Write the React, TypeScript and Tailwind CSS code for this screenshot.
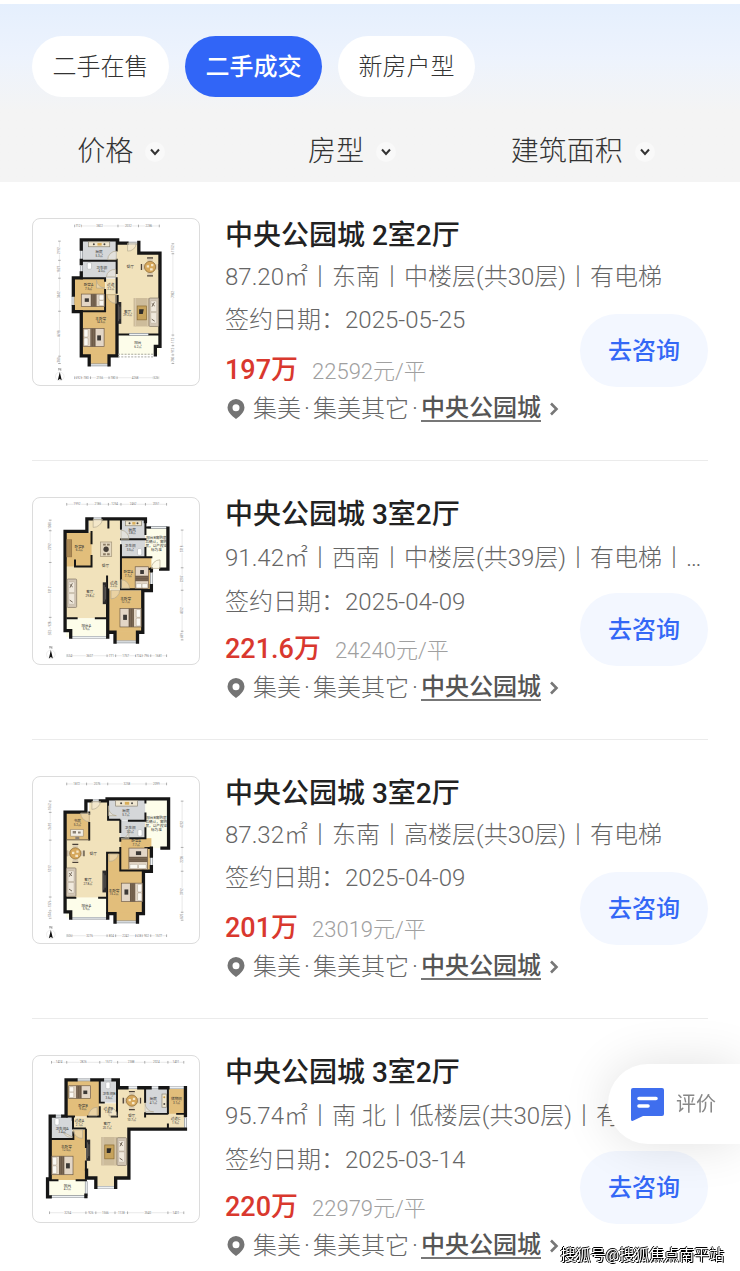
import { ReactNode } from "react";

type Listing = {
  id: number;
  title: string;
  detail: string;
  long?: boolean;
  date: string;
  price: string;
  unitPrice: string;
  plan: ReactNode;
};

const WALL = "#161616";
const FLOOR = "#f1e2bb";
const WOOD = "#e2be7b";
const TILE = "#d5d7d9";
const BALCONY = "#fdfdea";

type RoomProps = { x: number; y: number; w: number; h: number; fill: string };

function Room({ x, y, w, h, fill }: RoomProps) {
  return <rect x={x} y={y} width={w} height={h} fill={fill} />;
}

function Label({ x, y, name, area }: { x: number; y: number; name: string; area?: string }) {
  return (
    <text x={x} y={y} textAnchor="middle" fontSize="11" fill="#333">
      {name}
      {area && (
        <tspan x={x} dy="11" fontSize="9">
          {area}
        </tspan>
      )}
    </text>
  );
}

function Walls({ d }: { d: string }) {
  return <path d={d} fill="none" stroke={WALL} strokeWidth="10" strokeLinecap="square" />;
}

function InnerWalls({ d }: { d: string }) {
  return <path d={d} fill="none" stroke={WALL} strokeWidth="6" strokeLinecap="square" />;
}

function Windows({ d }: { d: string }) {
  return (
    <>
      <path d={d} fill="none" stroke="#8b9096" strokeWidth="8" />
      <path d={d} fill="none" stroke="#eef1f3" strokeWidth="4" />
    </>
  );
}

function Doors({ d }: { d: string }) {
  return <path d={d} fill="#f7f1e0" fillOpacity="0.4" stroke="#b3a88f" strokeWidth="2" />;
}

// pillows are on the left unless rotated
function Bed({ x, y, w = 62, h = 54, rotate = 0 }: { x: number; y: number; w?: number; h?: number; rotate?: number }) {
  return (
    <g transform={`translate(${x} ${y}) rotate(${rotate} ${w / 2} ${h / 2})`}>
      <rect width={w} height={h} fill="#e3d6c6" stroke="#6b5844" strokeWidth="2" />
      <rect x="2" y="3" width={w * 0.2} height={h * 0.42} rx="3" fill="#fbf8f2" stroke="#8b7a66" />
      <rect x="2" y={h * 0.52} width={w * 0.2} height={h * 0.42} rx="3" fill="#fbf8f2" stroke="#8b7a66" />
      <rect x={w * 0.34} width={w * 0.25} height={h} fill="#6c5a48" />
      <path d={`M${w * 0.4} 0V${h}M${w * 0.5} 0V${h}`} stroke="#85725d" strokeWidth="2" />
      <rect x={w * 0.67} y={h * 0.38} width={w * 0.18} height={h * 0.28} fill="#3c3936" />
    </g>
  );
}

function Sofa({ x, y, h }: { x: number; y: number; h: number }) {
  return (
    <g transform={`translate(${x} ${y})`}>
      <rect width="29" height={h} rx="3" fill="#d2c6b5" stroke="#7e7263" strokeWidth="2" />
      <rect x="5" y="9" width="18" height={h / 2 - 11} rx="2" fill="#f0e9dd" stroke="#a09482" />
      <rect x="5" y={h / 2 + 1} width="18" height={h / 2 - 11} rx="2" fill="#f0e9dd" stroke="#a09482" />
      <path d={`M8 16l9 8M16 13l-7 13M8 ${h - 22}l9 6`} stroke="#6f6456" strokeWidth="3" />
    </g>
  );
}

function Rug({ x, y }: { x: number; y: number }) {
  return (
    <g transform={`translate(${x} ${y})`}>
      <rect width="48" height="86" fill="#cdbc9b" />
      <path d="M6 0v86M42 0v86" stroke="#d9c9ac" strokeWidth="3" />
      <rect x="11" y="24" width="28" height="42" fill="#c6a35c" stroke="#8a6a33" strokeWidth="2" />
      <path d="M17 34h14l-3 14H17z" fill="#2d2b29" />
    </g>
  );
}

function Dining({ x, y }: { x: number; y: number }) {
  return (
    <g transform={`translate(${x} ${y})`}>
      <path d="M-9-27H9M-9 27H9M-26-9V9M26-9V9" stroke="#4a4038" strokeWidth="4" />
      <path d="M-8-21H8M-8 21H8M-20-8V8M20-8V8" stroke="#d9cbb2" strokeWidth="7" />
      <circle r="17" fill="#d6a85c" stroke="#82602d" strokeWidth="2" />
      <path d="M-10-5h7v7h-7zM3-9h7v7H3zM0 4h8v7H0z" fill="#f6e7c8" />
    </g>
  );
}

function Cabinet({ x, y, h }: { x: number; y: number; h: number }) {
  return (
    <g transform={`translate(${x} ${y})`}>
      <rect width="12" height={h} fill="#2c2a2a" />
      <path d={`M4 8V${h - 8}M8 14V${h - 14}`} stroke="#77716b" strokeWidth="2" />
    </g>
  );
}

function Stove({ x, y, w = 62, h = 15 }: { x: number; y: number; w?: number; h?: number }) {
  return (
    <g transform={`translate(${x} ${y})`}>
      <rect width={w} height={h} fill="#efe6d0" stroke="#87806f" strokeWidth="2" />
      <circle cx={w * 0.25} cy={h * 0.5} r="3" fill="#4b4843" />
      <circle cx={w * 0.75} cy={h * 0.5} r="3" fill="#4b4843" />
      <rect x={w * 0.42} y={h * 0.25} width={w * 0.2} height={h * 0.5} fill="#d8ad58" />
    </g>
  );
}

function Toilet({ x, y }: { x: number; y: number }) {
  return <rect x={x} y={y} width="13" height="20" rx="4" fill="#fff" stroke="#b4b8bb" strokeWidth="2" />;
}

type RulerProps = {
  horizontal: { y: number; ticks: number[]; values: string[] }[];
  vertical: { x: number; ticks: number[]; values: string[] }[];
};

function Rulers({ horizontal, vertical }: RulerProps) {
  return (
    <g fontSize="9" fill="#777" textAnchor="middle">
      {horizontal.map(({ y, ticks, values }) => (
        <g key={y}>
          <path d={`M${ticks[0]} ${y}H${ticks[ticks.length - 1]}`} stroke="#bbb" strokeWidth="1" />
          {ticks.map((t) => (
            <path key={t} d={`M${t} ${y - 4}v8`} stroke="#888" strokeWidth="2" />
          ))}
          {values.map((v, i) => (
            <text key={i} x={(ticks[i] + ticks[i + 1]) / 2} y={y + 3} stroke="#fff" strokeWidth="4" paintOrder="stroke">
              {v}
            </text>
          ))}
        </g>
      ))}
      {vertical.map(({ x, ticks, values }) => (
        <g key={x}>
          <path d={`M${x} ${ticks[0]}V${ticks[ticks.length - 1]}`} stroke="#bbb" strokeWidth="1" />
          {ticks.map((t) => (
            <path key={t} d={`M${x - 4} ${t}h8`} stroke="#888" strokeWidth="2" />
          ))}
          {values.map((v, i) => {
            const cy = (ticks[i] + ticks[i + 1]) / 2;
            return (
              <text
                key={i}
                x={x}
                y={cy + 3}
                transform={`rotate(-90 ${x} ${cy})`}
                stroke="#fff"
                strokeWidth="4"
                paintOrder="stroke"
              >
                {v}
              </text>
            );
          })}
        </g>
      ))}
    </g>
  );
}

function Compass({ x, y }: { x: number; y: number }) {
  return (
    <g transform={`translate(${x} ${y})`}>
      <circle r="13" fill="none" stroke="#ccc" strokeWidth="1" />
      <path d="M0-13L6 12 0 8-6 12z" fill="#111" />
      <path d="M-3-18v-7l6 7v-7" fill="none" stroke="#777" strokeWidth="2" />
    </g>
  );
}

function PlanA() {
  return (
    <>
      <Room x={280} y={98} w={66} h={276} fill={FLOOR} />
      <Room x={340} y={130} w={70} h={244} fill={FLOOR} />
      <Room x={245} y={205} w={40} h={50} fill={FLOOR} />
      <Room x={173} y={88} w={106} h={63} fill={TILE} />
      <Room x={173} y={151} w={106} h={53} fill={TILE} />
      <Room x={147} y={203} w={97} h={102} fill={WOOD} />
      <Room x={173} y={303} w={106} h={135} fill={WOOD} />
      <Room x={244} y={252} w={35} h={60} fill={WOOD} />
      <Room x={199} y={436} w={58} h={28} fill={WOOD} />
      <Room x={282} y={374} w={126} h={62} fill={BALCONY} />
      <Windows d="M172 120v26M172 166v20M147 258v30M200 466h56M312 98h28M316 374h60" />
      <Walls d="M172 116V88h110v10h28M172 150v10M172 188v15h-24v52M148 290v15h24v134h24v27M256 466v-27h24V260M346 96v32h64v282h-14v26" />
      <InnerWalls d="M279 92v28M279 148v40M175 151h104M172 204h72v8M244 240v64h-70M279 204v44M280 374h34M378 374h32" />
      <path d="M283 434h110M283 442h110" stroke="#a8a8a0" strokeWidth="3" strokeDasharray="6 4" fill="none" />
      <Doors d="M312 98v24a24 24 0 0 0 26-24zM278 122a26 26 0 0 0-26 26h26zM276 178a24 24 0 0 0-28 22h28zM218 210v24h26a26 26 0 0 1-26-24zM250 254a26 26 0 0 0 28 26v-26z" />
      <Stove x={194} y={94} w={64} />
      <Toilet x={190} y={157} />
      <Bed x={172} y={252} w={70} h={38} rotate={180} />
      <Bed x={178} y={356} w={63} h={55} />
      <Cabinet x={281} y={276} h={66} />
      <Rug x={330} y={264} />
      <Sofa x={377} y={264} h={86} />
      <Dining x={380} y={170} />
      <Label x={226} y={128} name="厨房" area="5.3㎡" />
      <Label x={234} y={175} name="卫生间" area="4.0㎡" />
      <Label x={194} y={228} name="卧室A" area="7.5㎡" />
      <Label x={261} y={228} name="过道" area="2.2㎡" />
      <Label x={320} y={174} name="餐厅" />
      <Label x={312} y={308} name="客厅" area="29.2㎡" />
      <Label x={231} y={329} name="主卧室" area="14.5㎡" />
      <Label x={343} y={404} name="阳台" area="6.2㎡" />
      <Rulers
        horizontal={[
          { y: 46, ticks: [152, 172, 283, 345, 408], values: ["712", "3822", "2032", "2286"] },
          { y: 505, ticks: [152, 173, 200, 256, 280, 390, 406], values: ["692", "780", "2156", "780", "4268", "526"] },
        ]}
        vertical={[
          { x: 106, ticks: [92, 150, 204, 304, 440, 462], values: ["2192", "1827", "3442", "4698", "780"] },
          { x: 449, ticks: [100, 130, 376, 408, 436, 462], values: ["1152", "7982", "112", "912", "780"] },
        ]}
      />
      <Compass x={107} y={501} />
    </>
  );
}

function PlanB() {
  return (
    <>
      <Room x={195} y={90} w={95} h={200} fill={FLOOR} />
      <Room x={124} y={215} w={126} h={174} fill={FLOOR} />
      <Room x={240} y={260} w={52} h={42} fill={FLOOR} />
      <Room x={124} y={130} w={79} h={102} fill={WOOD} />
      <Room x={292} y={90} w={74} h={60} fill={TILE} />
      <Room x={292} y={151} w={74} h={52} fill={TILE} />
      <Room x={366} y={116} w={68} h={124} fill={BALCONY} />
      <Room x={292} y={205} w={92} h={98} fill={WOOD} />
      <Room x={251} y={304} w={106} h={126} fill={WOOD} />
      <Room x={274} y={428} w={70} h={28} fill={WOOD} />
      <Room x={126} y={389} w={122} h={56} fill={BALCONY} />
      <Windows d="M142 446h108M274 460h66M372 114h60M384 250v36M206 88h30M124 152v60" />
      <Walls d="M204 88h-15v38h-66v300h17v20M238 88h128v8M434 116v124h-22M384 240v5M384 290v15h-26v126h-16v30M274 461v-30h-22V304M252 384v62" />
      <InnerWalls d="M203 128v34M203 200v32h-50v-18M254 92v22M292 92v26M292 150h74M366 96v38M366 176v26M292 168v36h92M292 205v96h64M250 262v122M130 389h28M216 389h34M366 114h14M366 240h20" />
      <Doors d="M208 90v24a28 28 0 0 0 28-24zM292 122a26 26 0 0 1 24 28h-24zM384 238a26 26 0 0 1 26-26v26zM262 304v26a26 26 0 0 0 26-26zM292 272a26 26 0 0 1 26 26h-26z" />
      <Stove x={306} y={94} w={48} />
      <Toilet x={342} y={178} />
      <rect x="127" y="150" width="17" height="54" fill="#9b7a4c" />
      <path d="M132 152v50M138 152v50" stroke="#c9a569" strokeWidth="2" />
      <rect x="230" y="158" width="34" height="44" fill="#e4d8c0" stroke="#a09276" strokeWidth="2" />
      <circle cx="247" cy="180" r="8" fill="#453e37" />
      <path d="M238 163h8v6h-8zM250 163h8v6h-8zM238 192h8v6h-8zM250 192h8v6h-8z" fill="#8a7b64" />
      <Sofa x={129} y={270} h={86} />
      <Cabinet x={237} y={280} h={66} />
      <Bed x={322} y={246} w={66} h={40} rotate={-90} />
      <Bed x={289} y={359} w={64} h={56} rotate={180} />
      <Label x={166} y={175} name="卧室B" area="6.2㎡" />
      <Label x={326} y={124} name="厨房" area="3.8㎡" />
      <Label x={320} y={174} name="卫生间" area="3.5㎡" />
      <Label x={245} y={234} name="餐厅" />
      <Label x={314} y={253} name="卧室A" area="7.7㎡" />
      <Label x={270} y={284} name="过道" area="2.2㎡" />
      <Label x={198} y={312} name="客厅" area="29.8㎡" />
      <Label x={306} y={332} name="主卧室" area="12.7㎡" />
      <Label x={187} y={414} name="阳台A" area="5.9㎡" />
      <Label x={399} y={150} name="阳台B需购房" />
      <Label x={399} y={162} name="后确认，需购" />
      <Label x={399} y={174} name="房，以产权证" />
      <Label x={399} y={186} name="标为准" />
      <Rulers
        horizontal={[
          { y: 44, ticks: [128, 190, 254, 292, 366, 430], values: ["1992", "2186", "1254", "2462", "2051"] },
          { y: 502, ticks: [128, 144, 250, 276, 336, 356, 382, 430], values: ["534", "3607", "771", "1757", "734", "796", "1681"] },
        ]}
        vertical={[
          { x: 78, ticks: [92, 124, 220, 386, 426, 438], values: ["1080", "2792", "5312", "928", "553"] },
          { x: 477, ticks: [122, 236, 304, 428, 454], values: ["3718", "2207", "4052", "689"] },
        ]}
      />
      <Compass x={80} y={498} />
    </>
  );
}

function PlanC() {
  return (
    <>
      <Room x={196} y={98} w={56} h={60} fill={FLOOR} />
      <Room x={196} y={152} w={94} h={102} fill={FLOOR} />
      <Room x={124} y={216} w={126} h={174} fill={FLOOR} />
      <Room x={124} y={132} w={74} h={84} fill={WOOD} />
      <Room x={254} y={92} w={112} h={64} fill={TILE} />
      <Room x={290} y={157} w={76} h={52} fill={TILE} />
      <Room x={366} y={92} w={68} h={148} fill={BALCONY} />
      <Room x={290} y={210} w={94} h={98} fill={WOOD} />
      <Room x={250} y={254} w={40} h={60} fill={WOOD} />
      <Room x={250} y={308} w={110} h={130} fill={WOOD} />
      <Room x={274} y={434} w={68} h={28} fill={WOOD} />
      <Room x={126} y={390} w={122} h={60} fill={BALCONY} />
      <Windows d="M142 452h108M274 463h66M206 97h20M384 266v34" />
      <Walls d="M202 97h-16v34h-63v302h17v19M230 97h20V91h186v149h-20M384 240v24M384 296v14h-24v128h-18v26M274 464v-26h-22M252 438v14" />
      <InnerWalls d="M253 96v58h34M196 132v4M196 164v50M316 157h50v-22M290 157v34M366 180v30h-76v8M366 94v8M290 240v68h70M250 254h38M250 256v180M128 390h26M226 390h24M366 240h18" />
      <path d="M128 215h68" stroke="#6f6350" strokeWidth="3" />
      <Doors d="M204 99v24a26 26 0 0 0 26-24zM170 134a26 26 0 0 0 26 26v-26zM254 112a26 26 0 0 0 24 30h-24zM292 212a26 26 0 0 0 24-30v30zM256 258v22a26 26 0 0 0 28-22z" />
      <Stove x={276} y={96} w={66} h={17} />
      <Toilet x={343} y={184} />
      <rect x="140" y="184" width="38" height="20" fill="#f2eee5" stroke="#9f8e73" strokeWidth="2" />
      <path d="M146 188h10v8h-10zM162 190h8v6h-8zM154 206h12v8h-12z" fill="#8b8174" />
      <Dining x={154} y={256} />
      <Sofa x={127} y={300} h={86} />
      <Cabinet x={236} y={308} h={66} />
      <Bed x={312} y={244} w={64} h={56} rotate={-90} />
      <Bed x={293} y={346} w={64} h={56} rotate={180} />
      <Label x={160} y={162} name="书房" area="5.2㎡" />
      <Label x={307} y={132} name="厨房" area="5.7㎡" />
      <Label x={320} y={183} name="卫生间" area="3.2㎡" />
      <Label x={338} y={223} name="卧室A" area="7.7㎡" />
      <Label x={208} y={262} name="餐厅" />
      <Label x={192} y={340} name="客厅" area="27.8㎡" />
      <Label x={271} y={372} name="主卧室" area="15.2㎡" />
      <Label x={187} y={417} name="阳台A" area="5.9㎡" />
      <Label x={399} y={152} name="阳台B需购房" />
      <Label x={399} y={164} name="后确认，需购" />
      <Label x={399} y={176} name="房，以产权证" />
      <Label x={399} y={188} name="标为准" />
      <Rulers
        horizontal={[
          { y: 46, ticks: [128, 188, 252, 368, 430], values: ["1872", "2076", "3258", "2099"] },
          { y: 505, ticks: [128, 144, 250, 276, 336, 356, 382, 430], values: ["506", "3276", "804", "2242", "638", "902", "1577"] },
        ]}
        vertical={[
          { x: 78, ticks: [98, 132, 216, 388, 430, 452], values: ["1062", "2692", "5312", "1376", "574"] },
          { x: 477, ticks: [98, 238, 310, 434, 458], values: ["4252", "2208", "3792", "875"] },
        ]}
      />
      <Compass x={80} y={501} />
    </>
  );
}

function PlanD() {
  return (
    <>
      <Room x={188} y={168} w={96} h={84} fill={FLOOR} />
      <Room x={148} y={210} w={60} h={36} fill={FLOOR} />
      <Room x={282} y={122} w={82} h={126} fill={FLOOR} />
      <Room x={360} y={200} w={126} h={48} fill={FLOOR} />
      <Room x={188} y={240} w={126} h={154} fill={FLOOR} />
      <Room x={216} y={392} w={60} h={30} fill={FLOOR} />
      <Room x={128} y={98} w={98} h={110} fill={WOOD} />
      <Room x={230} y={98} w={52} h={68} fill={TILE} />
      <Room x={366} y={122} w={68} h={76} fill={TILE} />
      <Room x={436} y={122} w={50} h={78} fill={WOOD} />
      <Room x={80} y={208} w={66} h={68} fill={TILE} />
      <Room x={80} y={278} w={106} h={122} fill={WOOD} />
      <Room x={146} y={248} w={40} h={34} fill={WOOD} />
      <Room x={76} y={400} w={112} h={48} fill={BALCONY} />
      <Windows d="M156 97h46M238 97h28M312 121h32M380 121h28M438 121h46M90 207h24M80 450h106M216 422h58M187 404v44M487 212v30" />
      <Walls d="M156 97h-30v110M204 97h32M268 97h16v24h26M346 121h34M410 121h24M487 121v84M487 246H316v148h-40v28M216 422v-28h-28v-24M124 207h-8M90 207H78v190h-8v54h8M186 450v-4" />
      <InnerWalls d="M228 98v68M228 166h12M280 100v108h-16M228 180v28h-36M130 208h20M365 124v40M365 198v10M365 200h66M434 124v74M462 200h24M434 232v14M147 210v34h36M80 276h68v-20M186 248v52M186 344v26M78 401h22M158 401h28M146 208v10" />
      <Doors d="M194 206a26 26 0 0 1 26-26v26zM148 248a26 26 0 0 0 28 26v-26zM146 270a26 26 0 0 1-28-14zM256 180a24 24 0 0 1 24 26h-24zM365 166a26 26 0 0 0 26 28h-26z" />
      <Bed x={134} y={115} w={66} h={38} />
      <Bed x={83} y={328} w={64} h={56} />
      <Toilet x={246} y={104} />
      <Toilet x={92} y={214} />
      <rect x="416" y="140" width="14" height="40" fill="#efe6d0" stroke="#87806f" strokeWidth="2" />
      <circle cx="423" cy="150" r="3" fill="#c99b42" />
      <circle cx="423" cy="170" r="3" fill="#4b4843" />
      <Dining x={325} y={160} />
      <Cabinet x={187} y={278} h={64} />
      <Rug x={232} y={270} />
      <Sofa x={280} y={272} h={84} />
      <Label x={177} y={178} name="卧室B" area="9.0㎡" />
      <Label x={256} y={144} name="卫生间B" area="3.6㎡" />
      <Label x={254} y={187} name="过道B" area="1.8㎡" />
      <Label x={324} y={210} name="餐厅" area="10.7㎡" />
      <Label x={390} y={158} name="厨房" area="4.1㎡" />
      <Label x={460} y={158} name="储物间" area="3.1㎡" />
      <Label x={457} y={219} name="过道C" area="1.9㎡" />
      <Label x={250} y={234} name="客厅" area="20.7㎡" />
      <Label x={166} y={226} name="过道A" area="2.1㎡" />
      <Label x={114} y={248} name="卫生间A" area="3.4㎡" />
      <Label x={127} y={302} name="主卧室" area="12.0㎡" />
      <Label x={130} y={420} name="阳台" area="4.2㎡" />
      <Rulers
        horizontal={[
          { y: 44, ticks: [82, 128, 228, 282, 364, 434, 482], values: ["1424", "2826", "1572", "2388", "2024", "1401"] },
          { y: 499, ticks: [76, 186, 216, 274, 312, 434, 482], values: ["3254", "926", "1566", "1138", "3540", "1401"] },
        ]}
        vertical={[]}
      />
    </>
  );
}

const listings: Listing[] = [
  {
    id: 1,
    title: "中央公园城 2室2厅",
    detail: "87.20㎡丨东南丨中楼层(共30层)丨有电梯",
    date: "2025-05-25",
    price: "197万",
    unitPrice: "22592元/平",
    plan: <PlanA />,
  },
  {
    id: 2,
    title: "中央公园城 3室2厅",
    detail: "91.42㎡丨西南丨中楼层(共39层)丨有电梯丨…",
    long: true,
    date: "2025-04-09",
    price: "221.6万",
    unitPrice: "24240元/平",
    plan: <PlanB />,
  },
  {
    id: 3,
    title: "中央公园城 3室2厅",
    detail: "87.32㎡丨东南丨高楼层(共30层)丨有电梯",
    date: "2025-04-09",
    price: "201万",
    unitPrice: "23019元/平",
    plan: <PlanC />,
  },
  {
    id: 4,
    title: "中央公园城 3室2厅",
    detail: "95.74㎡丨南 北丨低楼层(共30层)丨有电梯",
    long: true,
    date: "2025-03-14",
    price: "220万",
    unitPrice: "22979元/平",
    plan: <PlanD />,
  },
];

const tabs = ["二手在售", "二手成交", "新房户型"];
const filters = ["价格", "房型", "建筑面积"];

function ListingCard({ item }: { item: Listing }) {
  return (
    <li className="flex gap-[25px] border-b border-[#ebebeb] pt-9 pb-[34px] last:border-0 last:pb-2">
      <div className="h-[168px] w-[168px] shrink-0 overflow-hidden rounded-lg border border-[#dcdcdc] bg-white">
        <svg viewBox="26 25 502 502" className="h-full w-full" role="img" aria-label={`${item.title} 户型图`}>
          {item.plan}
        </svg>
      </div>
      <div className="flex min-h-[208px] min-w-0 flex-1 flex-col">
        <h2 className="text-[28px] leading-9 font-medium text-[#222]">{item.title}</h2>
        <p
          className={`mt-0.5 truncate text-2xl font-light text-[#666] ${item.long ? "leading-[46px]" : "leading-[43px]"}`}
        >
          {item.detail}
        </p>
        <div className="flex flex-1 items-stretch justify-between">
          <div className="flex flex-col justify-between">
            <p className="text-2xl leading-[43px] font-light text-[#666]">签约日期：{item.date}</p>
            <p className="flex items-baseline gap-3.5 leading-[34px]">
              <span className="text-[27px] font-medium text-[#d9382e]">{item.price}</span>
              <span className="text-[22px] font-light text-[#a0a0a0]">{item.unitPrice}</span>
            </p>
          </div>
          <button
            type="button"
            className="mb-0.5 h-[73px] w-32 self-end rounded-full bg-[#f3f7ff] text-2xl font-medium text-[#3468f6]"
          >
            去咨询
          </button>
        </div>
        <p className="mt-[3px] flex items-center text-2xl leading-[34px] font-light text-[#666]">
          <svg viewBox="0 0 18 20" className="mr-2 ml-0.5 h-5 w-[18px]" aria-hidden="true">
            <path
              fillRule="evenodd"
              fill="#747474"
              d="M9 0a8.5 8.5 0 0 0-8.5 8.6c0 3.6 2.4 6.4 5 8.6L9 20l3.500-2.800c2.600-2.200 5-5 5-8.600A8.500 8.500 0 0 0 9 0zm0 5.200a3.500 3.500 0 1 1 0 7 3.500 3.500 0 0 1 0-7z"
            />
          </svg>
          <span>集美</span>
          <span className="w-3 text-center">·</span>
          <span>集美其它</span>
          <span className="w-3 text-center">·</span>
          <a href="#" className="flex items-center font-medium text-[#555]">
            <span className="border-b-2 border-[#777] leading-6">中央公园城</span>
            <svg viewBox="0 0 10 14" className="ml-2 h-3.5 w-2.5" aria-hidden="true">
              <path d="M2 1.500L7.500 7 2 12.500" fill="none" stroke="#777" strokeWidth="2.600" />
            </svg>
          </a>
        </p>
      </div>
    </li>
  );
}

export default function App() {
  return (
    <div className="bg-white pt-1 font-['Roboto','Noto_Sans_CJK_SC',sans-serif]">
      <header className="bg-linear-to-b from-[#e5effd] via-[#edf3fd] via-30% to-[#f4f4f4] to-60%">
        <nav className="flex gap-4 px-8 pt-8">
          {tabs.map((tab) => (
            <button
              key={tab}
              type="button"
              className={`h-[61px] w-[137px] rounded-full text-2xl ${
                tab === "二手成交" ? "bg-[#3165f7] font-medium text-white" : "bg-white font-light text-[#333]"
              }`}
            >
              {tab}
            </button>
          ))}
        </nav>
        <div className="grid grid-cols-3 pt-[30px] pr-[42px] pb-[5px] pl-1.5">
          {filters.map((filter) => (
            <button
              key={filter}
              type="button"
              className="flex items-center justify-center gap-3 text-[28px] leading-[50px] font-light text-[#333]"
            >
              {filter}
              <span className="flex h-5 w-5 items-center justify-center rounded-full bg-[#f9f9f9]">
                <svg viewBox="0 0 10 8" className="h-2 w-2.5" aria-hidden="true">
                  <path d="M1 1.500L5 6l4-4.500" fill="none" stroke="#333" strokeWidth="2" />
                </svg>
              </span>
            </button>
          ))}
        </div>
      </header>

      <ul className="px-8">
        {listings.map((item) => (
          <ListingCard key={item.id} item={item} />
        ))}
      </ul>

      <button
        type="button"
        className="fixed right-0 bottom-[127px] flex h-20 w-[132px] items-center gap-3 rounded-l-full bg-white pl-[23px] text-xl text-[#888] shadow-[0_0_50px_rgba(0,0,0,0.12)]"
      >
        <svg viewBox="0 0 33 33" className="h-[33px] w-[33px]" aria-hidden="true">
          <path d="M2 0h29a2 2 0 0 1 2 2v24a2 2 0 0 1-2 2H12L1.500 33Q0 33 0 31.500V2a2 2 0 0 1 2-2z" fill="#3f6eee" />
          <path d="M8 10.500h17M8 18h9" stroke="#fff" strokeWidth="3.600" strokeLinecap="round" />
        </svg>
        评价
      </button>

      <div className="fixed right-4 bottom-1 text-[15px] leading-6 text-white [text-shadow:1px_1px_0_#000,-1px_0_0_#000,0_-1px_0_#000]">
        搜狐号@搜狐焦点南平站
      </div>
    </div>
  );
}
